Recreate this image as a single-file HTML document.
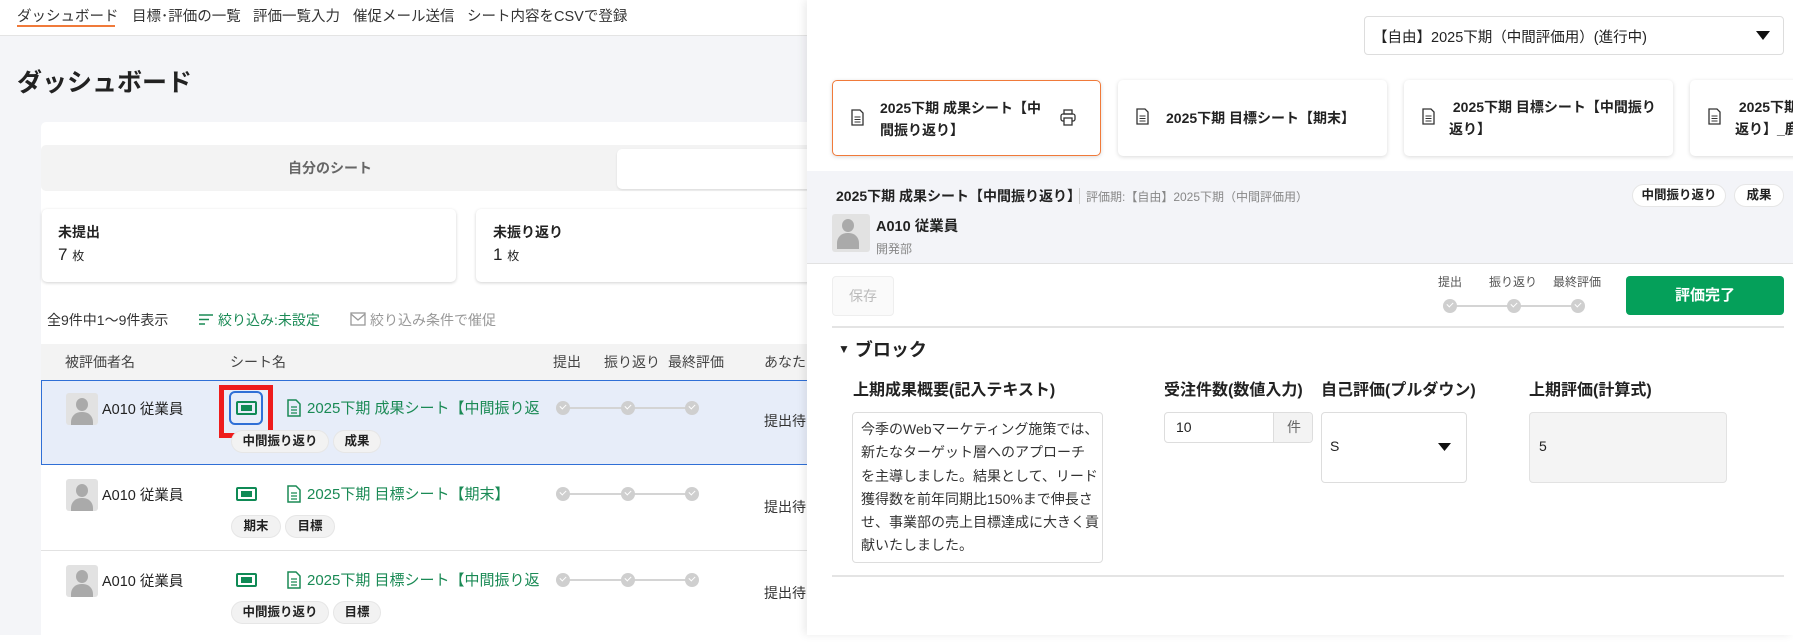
<!DOCTYPE html>
<html><head><meta charset="utf-8"><style>
*{box-sizing:border-box;margin:0;padding:0}
body{width:1793px;height:635px;overflow:hidden;position:relative;background:#fff;font-family:"Liberation Sans","Noto Sans CJK JP",sans-serif;color:#222}
.a{position:absolute;white-space:nowrap}
.nav{left:0;top:0;width:807px;height:36px;background:#fff;border-bottom:1px solid #e4e4e4}
.nav span{position:absolute;top:5px;font-size:14.5px;color:#333}
.left{left:0;top:36px;width:807px;height:599px;background:#f4f5f8}
.b{font-weight:bold}
.card{background:#fff;border-radius:5px;box-shadow:0 1px 3px rgba(0,0,0,.18)}
.pill{position:absolute;height:23px;border-radius:12px;background:#f2f2f2;border:1px solid #e6e6e6;font-size:12.5px;font-weight:bold;line-height:21px;text-align:center;color:#222}
.av{position:absolute;width:32px;height:32px;background:#e2e2e2;border-radius:3px;overflow:hidden}
.av:before{content:"";position:absolute;left:10px;top:5px;width:12px;height:13px;border-radius:50%;background:#aaa}
.av:after{content:"";position:absolute;left:5px;top:19px;width:22px;height:16px;border-radius:10px 10px 0 0;background:#aaa}
.gi{position:absolute;width:21px;height:14px;border:2px solid #0f8a55;border-radius:2px}
.gi:after{content:"";position:absolute;left:3px;top:2px;width:11px;height:6px;background:#0f8a55}
.lnk{position:absolute;font-size:15px;color:#1a8a55}
.dots{position:absolute;height:14px}
.dots i{position:absolute;top:0;width:14px;height:14px;border-radius:50%;background:#cfcfcf}
.dots b{position:absolute;top:6px;height:2px;background:#d4d4d4}
.dots i:after{content:"";position:absolute;left:4px;top:3px;width:5px;height:3px;border-left:1.5px solid #fff;border-bottom:1.5px solid #fff;transform:rotate(-45deg)}
.panel{left:807px;top:0;width:986px;height:635px;background:#fff;box-shadow:-3px 0 8px rgba(0,0,0,.08)}
.sc{position:absolute;top:80px;height:76px;background:#fff;border-radius:5px;box-shadow:0 1px 4px rgba(0,0,0,.15);font-size:14px;font-weight:bold;line-height:22px}
.lbl{position:absolute;top:376px;font-size:16px;font-weight:bold;color:#222}
</style></head><body>
<div class="a nav">
<span style="left:17px">ダッシュボード</span><div class="a" style="left:17px;top:25px;width:98px;height:2px;background:#f07a3a"></div>
<span style="left:132px">目標･評価の一覧</span><span style="left:253px">評価一覧入力</span><span style="left:353px">催促メール送信</span><span style="left:467px">シート内容をCSVで登録</span>
</div>
<div class="a left"></div>
<div class="a b" style="left:17px;top:63px;font-size:25px">ダッシュボード</div>
<div class="a" style="left:41px;top:122px;width:800px;height:520px;background:#fff;border-radius:5px"></div>
<div class="a" style="left:41px;top:145px;width:780px;height:46px;background:#f3f3f3;border-radius:5px"></div>
<div class="a" style="left:288px;top:158px;font-size:14px;color:#666;font-weight:bold">自分のシート</div>
<div class="a" style="left:617px;top:149px;width:200px;height:40px;background:#fff;border-radius:5px;box-shadow:0 1px 2px rgba(0,0,0,.1)"></div>
<div class="a card" style="left:42px;top:209px;width:414px;height:73px"></div>
<div class="a b" style="left:58px;top:222px;font-size:14px">未提出</div>
<div class="a" style="left:58px;top:245px;font-size:17px">7 <span style="font-size:12px">枚</span></div>
<div class="a card" style="left:476px;top:209px;width:400px;height:73px"></div>
<div class="a b" style="left:493px;top:222px;font-size:14px">未振り返り</div>
<div class="a" style="left:493px;top:245px;font-size:17px">1 <span style="font-size:12px">枚</span></div>
<div class="a" style="left:47px;top:310px;font-size:14px;color:#333">全9件中1〜9件表示</div>
<svg class="a" style="left:198px;top:313px" width="16" height="13"><path d="M1 2h14M1 6.5h10M1 11h6" stroke="#1a8a55" stroke-width="1.6"/></svg>
<div class="a" style="left:218px;top:310px;font-size:14px;color:#1a8a55">絞り込み:未設定</div>
<svg class="a" style="left:350px;top:312px" width="16" height="14"><rect x="1" y="1" width="14" height="12" fill="none" stroke="#999" stroke-width="1.3"/><path d="M1 2l7 6 7-6" fill="none" stroke="#999" stroke-width="1.3"/></svg>
<div class="a" style="left:370px;top:310px;font-size:14px;color:#999">絞り込み条件で催促</div>
<div class="a" style="left:41px;top:344px;width:780px;height:36px;background:#f3f3f3"></div>
<div class="a" style="top:352px;left:0;font-size:14px;color:#444;width:807px;height:20px">
<span class="a" style="left:65px">被評価者名</span><span class="a" style="left:230px">シート名</span><span class="a" style="left:553px">提出</span><span class="a" style="left:604px">振り返り</span><span class="a" style="left:668px">最終評価</span><span class="a" style="left:764px">あなたの</span></div>
<div class="a" style="left:41px;top:380px;width:780px;height:85px;background:#e7edf9;border:1px solid #2f6fd6"></div>
<div class="a" style="left:41px;top:550px;width:780px;height:1px;background:#e2e2e2"></div>
<!-- rows -->
<div class="av" style="left:66px;top:393px"></div><div class="a" style="left:102px;top:398px;font-size:14.5px">A010 従業員</div>
<div class="a" style="left:219px;top:385px;width:54px;height:53px;border:5px solid #ee1c1c"></div>
<div class="a" style="left:229px;top:391px;width:34px;height:34px;border:2px solid #2f6fd6;border-radius:6px"></div>
<div class="gi" style="left:236px;top:401px"></div>
<svg class="a" style="left:287px;top:399px" width="14" height="18"><path d="M1 1h8l4 4v12H1z" fill="none" stroke="#1a8a55" stroke-width="1.5"/><path d="M4 8h6M4 11h6M4 14h6" stroke="#1a8a55" stroke-width="1.3"/></svg>
<div class="lnk" style="left:307px;top:397px">2025下期 成果シート【中間振り返</div>
<div class="pill" style="left:231px;top:430px;width:98px">中間振り返り</div><div class="pill" style="left:333px;top:430px;width:48px">成果</div>
<div class="dots" style="left:556px;top:401px;width:150px"><b style="left:7px;width:130px"></b><i style="left:0"></i><i style="left:65px"></i><i style="left:129px"></i></div>
<div class="a" style="left:764px;top:411px;font-size:14px;color:#333">提出待</div>

<div class="av" style="left:66px;top:479px"></div><div class="a" style="left:102px;top:484px;font-size:14.5px">A010 従業員</div>
<div class="gi" style="left:236px;top:487px"></div>
<svg class="a" style="left:287px;top:485px" width="14" height="18"><path d="M1 1h8l4 4v12H1z" fill="none" stroke="#1a8a55" stroke-width="1.5"/><path d="M4 8h6M4 11h6M4 14h6" stroke="#1a8a55" stroke-width="1.3"/></svg>
<div class="lnk" style="left:307px;top:483px">2025下期 目標シート【期末】</div>
<div class="pill" style="left:231px;top:515px;width:50px">期末</div><div class="pill" style="left:285px;top:515px;width:50px">目標</div>
<div class="dots" style="left:556px;top:487px;width:150px"><b style="left:7px;width:130px"></b><i style="left:0"></i><i style="left:65px"></i><i style="left:129px"></i></div>
<div class="a" style="left:764px;top:497px;font-size:14px;color:#333">提出待</div>

<div class="av" style="left:66px;top:565px"></div><div class="a" style="left:102px;top:570px;font-size:14.5px">A010 従業員</div>
<div class="gi" style="left:236px;top:573px"></div>
<svg class="a" style="left:287px;top:571px" width="14" height="18"><path d="M1 1h8l4 4v12H1z" fill="none" stroke="#1a8a55" stroke-width="1.5"/><path d="M4 8h6M4 11h6M4 14h6" stroke="#1a8a55" stroke-width="1.3"/></svg>
<div class="lnk" style="left:307px;top:569px">2025下期 目標シート【中間振り返</div>
<div class="pill" style="left:231px;top:601px;width:98px">中間振り返り</div><div class="pill" style="left:333px;top:601px;width:48px">目標</div>
<div class="dots" style="left:556px;top:573px;width:150px"><b style="left:7px;width:130px"></b><i style="left:0"></i><i style="left:65px"></i><i style="left:129px"></i></div>
<div class="a" style="left:764px;top:583px;font-size:14px;color:#333">提出待</div>

<!-- panel -->
<div class="a panel">
<div class="a" style="left:557px;top:16px;width:420px;height:39px;border:1px solid #ddd;border-radius:4px"></div>
<div class="a" style="left:566px;top:26px;font-size:14.5px;color:#222">【自由】2025下期（中間評価用）(進行中)</div>
<svg class="a" style="left:949px;top:31px" width="14" height="9"><path d="M0 0h14L7 9z" fill="#111"/></svg>

<div class="sc" style="left:25px;width:269px;border:1px solid #f07a3a"><svg class="a" style="left:18px;top:28px" width="13" height="17"><path d="M1 1h8l3 3v12H1z" fill="none" stroke="#333" stroke-width="1.3"/><path d="M3.5 8h6M3.5 10.5h6M3.5 13h6" stroke="#333" stroke-width="1.1"/></svg><div class="a" style="left:47px;top:16px">2025下期 成果シート【中<br>間振り返り】</div>
<svg class="a" style="left:227px;top:28px" width="16" height="17"><rect x="4" y="1" width="8" height="4" fill="none" stroke="#333" stroke-width="1.3"/><rect x="1" y="5" width="14" height="7" rx="2" fill="none" stroke="#333" stroke-width="1.3"/><rect x="4" y="9" width="8" height="7" fill="#fff" stroke="#333" stroke-width="1.3"/></svg></div>
<div class="sc" style="left:311px;width:269px"><svg class="a" style="left:18px;top:28px" width="13" height="17"><path d="M1 1h8l3 3v12H1z" fill="none" stroke="#333" stroke-width="1.3"/><path d="M3.5 8h6M3.5 10.5h6M3.5 13h6" stroke="#333" stroke-width="1.1"/></svg><div class="a" style="left:48px;top:27px">2025下期 目標シート【期末】</div></div>
<div class="sc" style="left:597px;width:269px"><svg class="a" style="left:18px;top:28px" width="13" height="17"><path d="M1 1h8l3 3v12H1z" fill="none" stroke="#333" stroke-width="1.3"/><path d="M3.5 8h6M3.5 10.5h6M3.5 13h6" stroke="#333" stroke-width="1.1"/></svg><div class="a" style="left:45px;top:16px">&nbsp;2025下期 目標シート【中間振り<br>返り】</div></div>
<div class="sc" style="left:883px;width:200px"><svg class="a" style="left:18px;top:28px" width="13" height="17"><path d="M1 1h8l3 3v12H1z" fill="none" stroke="#333" stroke-width="1.3"/><path d="M3.5 8h6M3.5 10.5h6M3.5 13h6" stroke="#333" stroke-width="1.1"/></svg><div class="a" style="left:45px;top:16px">&nbsp;2025下期 目標<br>返り】_鹿</div></div>

<div class="a" style="left:0;top:171px;width:986px;height:93px;background:#f3f4f8;border-bottom:1px solid #e2e2e2"></div>
<div class="a b" style="left:29px;top:186px;font-size:14px">2025下期 成果シート【中間振り返り】</div>
<div class="a" style="left:272px;top:188px;width:1px;height:16px;background:#ccc"></div>
<div class="a" style="left:279px;top:188px;font-size:12px;color:#888">評価期:【自由】2025下期（中間評価用）</div>
<div class="pill" style="left:825px;top:184px;width:94px;background:#fff">中間振り返り</div>
<div class="pill" style="left:927px;top:184px;width:50px;background:#fff">成果</div>
<div class="av" style="left:25px;top:214px;width:38px;height:38px"></div>
<div class="a b" style="left:69px;top:215px;font-size:14.5px">A010 従業員</div>
<div class="a" style="left:69px;top:240px;font-size:12px;color:#888">開発部</div>

<div class="a" style="left:25px;top:276px;width:62px;height:40px;border:1px solid #eee;border-radius:4px;background:#fafafa;font-size:14px;color:#bbb;text-align:center;line-height:38px">保存</div>
<div class="a" style="left:631px;top:273px;font-size:12px;color:#555">提出</div>
<div class="a" style="left:682px;top:273px;font-size:12px;color:#555">振り返り</div>
<div class="a" style="left:746px;top:273px;font-size:12px;color:#555">最終評価</div>
<div class="dots" style="left:636px;top:299px;width:150px"><b style="left:7px;width:128px"></b><i style="left:0"></i><i style="left:64px"></i><i style="left:128px"></i></div>
<div class="a b" style="left:819px;top:276px;width:158px;height:39px;background:#05a05a;border-radius:4px;color:#fff;font-size:15px;text-align:center;line-height:39px">評価完了</div>
<div class="a" style="left:25px;top:326px;width:952px;height:2px;background:#e4e4e4"></div>
<div class="a b" style="left:31px;top:336px;font-size:18px"><span style="font-size:12px;vertical-align:3px">▼</span> ブロック</div>
<div class="lbl" style="left:46px">上期成果概要(記入テキスト)</div>
<div class="lbl" style="left:357px">受注件数(数値入力)</div>
<div class="lbl" style="left:514px">自己評価(プルダウン)</div>
<div class="lbl" style="left:722px">上期評価(計算式)</div>
<div class="a" style="left:45px;top:412px;width:251px;height:151px;border:1px solid #ddd;border-radius:4px;padding:5px 8px;font-size:14px;line-height:23.3px;color:#333;white-space:nowrap">今季のWebマーケティング施策では、<br>新たなターゲット層へのアプローチ<br>を主導しました。結果として、リード<br>獲得数を前年同期比150%まで伸長さ<br>せ、事業部の売上目標達成に大きく貢<br>献いたしました。</div>
<div class="a" style="left:357px;top:412px;width:149px;height:31px;border:1px solid #ddd;border-radius:4px;overflow:hidden"><div class="a" style="left:11px;top:6px;font-size:14px">10</div><div class="a" style="left:108px;top:0;width:41px;height:31px;background:#f3f3f3;border-left:1px solid #ddd;text-align:center;line-height:29px;font-size:14px;color:#666">件</div></div>
<div class="a" style="left:514px;top:412px;width:146px;height:71px;border:1px solid #ddd;border-radius:4px"><div class="a" style="left:8px;top:25px;font-size:14px">S</div><svg class="a" style="left:116px;top:30px" width="13" height="8"><path d="M0 0h13L6.5 8z" fill="#111"/></svg></div>
<div class="a" style="left:722px;top:412px;width:198px;height:71px;border:1px solid #e2e2e2;border-radius:4px;background:#f4f4f4"><div class="a" style="left:9px;top:25px;font-size:14px">5</div></div>
<div class="a" style="left:25px;top:575px;width:952px;height:2px;background:#e4e4e4"></div>
</div>
</body></html>
